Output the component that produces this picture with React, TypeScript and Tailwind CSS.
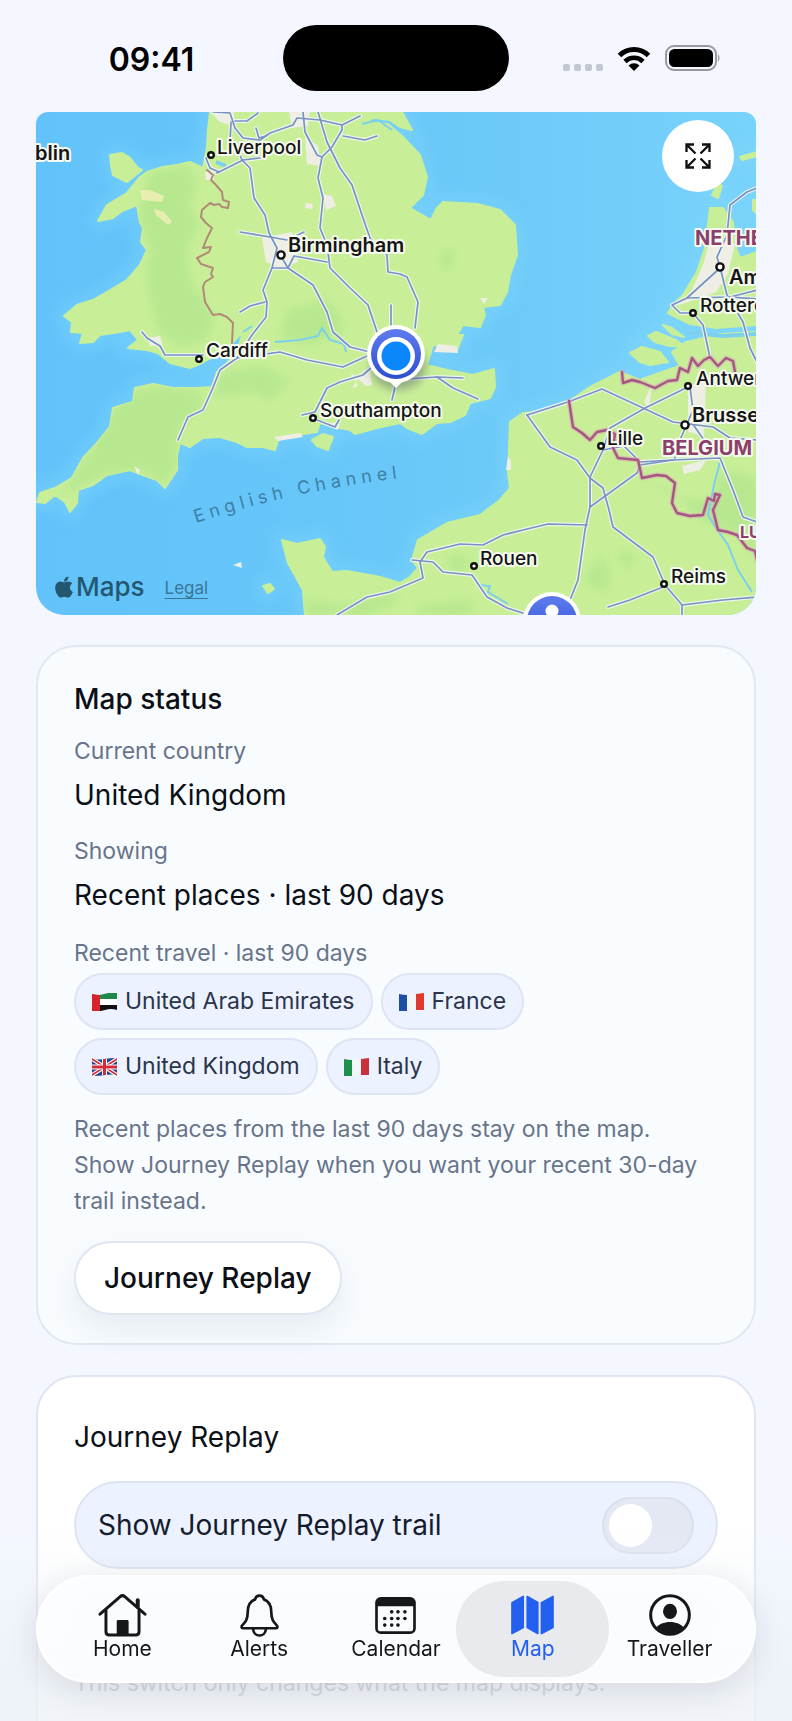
import { useState, type ReactNode } from "react";
import { FaApple } from "react-icons/fa";

const LAND = [
  // Great Britain
  "M210 112 L208 130 207 147 205 158 203 168 190 162 177 165 163 167 147 172 140 177 127 193 107 205 98 221 113 218 122 211 137 205 140 222 143 228 141 242 147 250 140 265 127 280 107 292 93 300 77 305 64 316 72 322 71 332 83 333 80 343 93 342 100 335 120 332 130 330 138 340 128 348 147 350 158 353 170 363 190 368 202 363 207 360 220 353 230 345 243 332 237 352 227 363 217 372 212 387 197 388 173 388 153 384 135 388 133 402 113 408 110 427 97 443 83 458 72 478 55 488 40 493 37 502 45 503 55 495 65 502 70 512 77 503 78 490 93 485 107 475 130 470 143 475 157 480 165 488 177 470 177 455 180 443 190 447 203 438 220 437 237 442 247 447 263 447 275 450 278 440 297 435 317 432 320 423 340 428 350 430 355 434 377 428 400 423 407 428 422 434 437 423 450 422 465 415 470 403 490 398 495 387 494 369 473 375 447 370 427 365 433 345 457 350 463 335 457 335 463 325 480 327 485 315 483 307 500 305 507 292 510 275 517 255 515 225 500 210 477 204 443 202 437 208 431 220 410 208 423 195 427 177 420 155 403 137 388 124 368 122 372 118 390 120 400 127 412 130 402 112Z",
  // Anglesey, Isle of Wight
  "M110 155 L122 153 130 158 138 168 142 170 127 182 113 175 111 165Z",
  "M312 440 L323 434 333 437 328 450 317 446Z",
  "M263 586 L270 584 274 589 268 593Z",
  // France and the Low Countries
  "M282 540 L297 544 320 539 325 547 323 557 332 572 347 571 380 577 400 583 410 577 418 568 412 560 418 540 447 523 480 515 500 500 510 488 508 473 510 422 523 413 540 412 568 402 590 387 620 372 640 380 662 372 680 366 672 352 686 342 704 338 722 334 757 332 757 325 716 328 690 324 668 313 673 305 683 295 697 272 705 248 710 208 723 208 733 222 735 245 740 258 757 252 757 615 305 615 303 590 288 563Z",
  "M648 336 L656 332 676 340 684 346 670 346 655 342Z",
  "M630 353 L642 347 660 352 668 362 650 365 640 362Z",
  "M663 325 L672 328 684 337 672 334Z",
  "M712 195 L718 183 722 186 718 198Z",
  "M740 157 L757 152 757 156 742 160Z",
  "M753 200 L757 200 757 214 753 210Z",
];

const FOREST = [
  "M150 172 L188 166 196 182 190 210 200 225 186 250 192 285 204 300 214 320 206 340 180 346 160 334 150 300 146 270 152 250 142 226 140 205Z",
  "M114 410 L135 392 160 386 200 392 205 405 186 420 176 442 178 462 165 484 140 470 106 474 78 488 60 495 84 462Z",
  "M220 372 L262 366 290 380 272 400 250 392 214 398Z",
  "M441 252 L450 247 454 262 448 272 441 264Z",
  "M640 484 L672 490 700 520 740 534 757 560 757 478 722 470 712 500 690 500Z",
  "M585 575 L602 555 610 572 608 592 588 585Z",
  "M448 555 L468 556 464 572 450 572Z",
  "M305 600 L345 605 390 592 400 600 370 615 306 615Z",
  "M288 310 L330 300 345 330 310 345 280 338Z",
  "M415 606 L470 600 474 615 420 615Z",
  "M620 550 L637 556 628 570 618 560Z",
];

const TOWNS = [
  "M262 238 L292 232 298 262 282 268 266 262Z",
  "M211 113 L234 112 234 126 220 122Z",
  "M305 137 L318 146 321 166 307 164Z",
  "M323 194 L332 196 336 206 326 210Z",
  "M289 112 L310 112 308 126 292 128Z",
  "M306 203 L313 204 312 209 305 208Z",
  "M205 172 L214 170 214 180 206 180Z",
  "M438 344 L457 346 458 353 434 352Z",
  "M147 338 L160 336 163 345 150 346Z",
  "M350 372 L358 386 352 388 364 370 370 370 372 385 366 386Z",
  "M709 242 L735 244 728 274 716 292 700 298 676 306 692 290 704 262Z",
  "M688 386 L706 380 704 436 688 432Z",
  "M682 466 L706 460 700 470 684 474Z",
  "M644 402 L652 384 649 408Z",
  "M508 457 L511 460 511 470 506 470Z",
  "M274 437 L300 433 303 437 278 441Z",
  "M332 422 L340 424 338 430 330 426Z",
  "M134 466 L140 470 138 475Z",
  "M233 565 L241 562 242 568Z",
  "M480 298 L488 298 484 304Z",
];

const ROADS = [
  "242,160 250,168 254,198 265,215 269,233 277,248 272,268 263,290 267,302 266,317 252,335 237,358 220,370 212,390 203,410 188,417 178,440",
  "213,112 230,113 235,128 243,138 260,140 270,133 293,125 297,118 320,120 342,125 360,116",
  "231,122 230,142 238,150 242,160",
  "235,121 247,121 258,113",
  "256,128 259,138 266,136",
  "206,158 210,168 219,172",
  "217,173 243,160 260,158",
  "303,112 305,132 317,155 322,157 318,178 323,198 320,228 327,245 330,268 350,288 368,305 377,332",
  "318,112 327,142 340,168 352,185 363,218 370,238 387,255 388,272 400,274 407,277 418,302 415,328",
  "322,157 332,147 342,130 342,125",
  "343,136 365,140 377,136",
  "240,232 270,237 287,240 304,232",
  "272,268 288,268 313,285 327,312 333,332 350,347 370,352",
  "282,258 288,268 294,256 327,262",
  "240,312 250,306 265,302",
  "142,332 147,338 160,346 165,355 203,355",
  "237,358 280,352 307,360 343,367 367,356",
  "302,415 315,412 327,388 340,382 363,375 372,367",
  "317,420 335,427 339,420",
  "390,380 437,377 463,378",
  "437,377 453,388 478,399",
  "396,383 392,400",
  "391,330 391,305",
  "527,415 550,447 577,460 590,478 603,488 609,510 613,527 653,557 665,585 682,605 682,615",
  "527,415 568,402 602,389 643,408 673,422 713,427 730,438 757,440",
  "688,387 647,407 610,428 603,450 590,477 590,507 585,530 578,580 570,600",
  "603,450 624,446 640,462 673,460",
  "590,507 637,473 640,465 673,460 720,458 733,490 743,517 757,522",
  "587,525 548,524 523,530 503,535 483,545 460,544 427,552 420,562 423,578 390,592 367,597 337,615",
  "412,560 433,562 443,572 472,575 487,597 507,608 523,613",
  "608,607 630,600 663,587",
  "682,605 723,600 757,597",
  "690,387 693,410 680,440 675,458",
  "692,423 704,440",
  "757,188 747,192 730,205 727,235 717,257 720,267 727,295 743,322 750,348 757,362",
  "720,268 687,298 672,305 680,313 693,313 703,325 710,358",
  "687,298 730,297 757,290",
  "730,297 757,299",
];

const BORDERS = [
  "569,401 573,427 582,433 590,440 597,432 607,430 615,434 613,448 618,458 628,459 638,460 642,478 657,475 666,476 675,483 672,503 677,513 690,516 703,515 708,498 714,501 715,494 720,495 713,510 718,530 728,532 737,535 747,548 755,551 757,560",
  "622,372 623,383 632,380 640,382 655,388 668,381 677,380 680,368 688,372 692,358 698,366 704,360 710,357 718,366 726,358 733,361 735,372",
];

type Place = {
  name: string;
  x: number;
  y: number;
  dot?: [number, number];
  major?: boolean;
};

const PLACES: Place[] = [
  { name: "blin", x: 35, y: 160, major: true },
  { name: "Liverpool", x: 217, y: 154, dot: [211, 155] },
  { name: "Birmingham", x: 288, y: 252, dot: [281, 255], major: true },
  { name: "Cardiff", x: 206, y: 357, dot: [199, 359] },
  { name: "Southampton", x: 320, y: 417, dot: [313, 418] },
  { name: "Amsterdam", x: 729, y: 284, dot: [720, 267], major: true },
  { name: "Rotterdam", x: 700, y: 312, dot: [693, 313] },
  { name: "Antwerp", x: 696, y: 385, dot: [688, 386] },
  { name: "Brussels", x: 692, y: 422, dot: [685, 425], major: true },
  { name: "Lille", x: 607, y: 445, dot: [601, 446] },
  { name: "Rouen", x: 480, y: 565, dot: [474, 566] },
  { name: "Reims", x: 671, y: 583, dot: [664, 584] },
];

function MapCanvas() {
  return (
    <svg
      viewBox="36 112 720 503"
      className="block h-auto w-full"
      role="img"
      aria-label="Map of southern England, northern France and Belgium"
    >
      <defs>
        <linearGradient id="sea" x1="0" y1="0" x2="1" y2="0">
          <stop offset="0" stopColor="#62c3fa" />
          <stop offset="0.35" stopColor="#66c6f9" />
          <stop offset="0.65" stopColor="#6dcaf8" />
          <stop offset="1" stopColor="#78d3fb" />
        </linearGradient>
        <linearGradient id="pin" x1="0" y1="0" x2="0" y2="1">
          <stop offset="0" stopColor="#5f7bee" />
          <stop offset="1" stopColor="#2c4fd0" />
        </linearGradient>
        <filter id="shallow" x="-10%" y="-10%" width="120%" height="120%">
          <feGaussianBlur stdDeviation="8" />
        </filter>
        <filter id="soft" x="-50%" y="-50%" width="200%" height="200%">
          <feGaussianBlur stdDeviation="4" />
        </filter>
        <clipPath id="land">
          {LAND.map((d) => (
            <path key={d} d={d} />
          ))}
        </clipPath>
        <path id="channel" d="M196 523 Q 300 488 420 476" />
      </defs>

      <rect x="36" y="112" width="720" height="503" fill="url(#sea)" />
      <g filter="url(#shallow)" stroke="#84d8fc" strokeWidth="12" fill="none" opacity="0.5">
        {LAND.map((d) => (
          <path key={d} d={d} />
        ))}
      </g>
      <g fill="#c8ef98" stroke="#c8ef98" strokeWidth="2" strokeLinejoin="round">
        {LAND.map((d) => (
          <path key={d} d={d} />
        ))}
      </g>
      <g clipPath="url(#land)">
        <g fill="#b5e78f" opacity="0.9" filter="url(#soft)">
          {FOREST.map((d) => (
            <path key={d} d={d} />
          ))}
        </g>
        <g fill="#e8eeb0">
          <path d="M140 190 L150 190 164 196 162 202 142 200Z" />
          <path d="M154 209 L164 212 172 222 168 225 156 215Z" />
        </g>
      </g>
      <g fill="#eeeee4">
        {TOWNS.map((d) => (
          <path key={d} d={d} />
        ))}
      </g>

      <g fill="none" stroke="#7dd0ec" strokeWidth="2">
        <path d="M243 332 L252 326 M275 342 L300 340 318 336 322 328 330 340 344 344 346 352 M362 124 L378 120 392 130" />
        <path d="M472 575 L480 585 490 586 488 592 508 604 M720 462 L714 485 708 515 716 528 728 545 738 570 752 592" />
        <path d="M686 332 L722 336 757 334 M216 162 L226 166" strokeWidth="4" />
      </g>

      <g fill="none" strokeLinejoin="round" strokeLinecap="round">
        {ROADS.map((points) => (
          <polyline key={points} points={points} stroke="#eef5ea" strokeWidth="4" />
        ))}
        {ROADS.map((points) => (
          <polyline key={points} points={points} stroke="#7892c3" strokeWidth="1.7" />
        ))}
        <polyline
          points="207,170 213,175 211,180 216,185 222,192 223,200 229,202 228,208 222,207 219,204 214,205 210,203 202,210 201,217 206,223 212,228 207,238 203,248 211,247 209,252 197,258 201,264 213,268 211,274 213,277 205,282 203,287 205,302 213,315 220,314 227,317 233,323 232,343"
          stroke="#b28a78"
          strokeWidth="2"
        />
        {BORDERS.map((points) => (
          <polyline key={points} points={points} stroke="#dba6b8" strokeWidth="5" opacity="0.6" />
        ))}
        {BORDERS.map((points) => (
          <polyline key={points} points={points} stroke="#a5587f" strokeWidth="2.4" />
        ))}
      </g>

      <g
        className="font-['Inter',sans-serif]"
        stroke="#f6faf0"
        strokeWidth="4"
        strokeLinejoin="round"
        paintOrder="stroke"
        fill="#151515"
      >
        {PLACES.map((place) => (
          <text
            key={place.name}
            x={place.x}
            y={place.y}
            fontSize={place.major ? 20 : 19}
            fontWeight={place.major ? 600 : 500}
          >
            {place.name}
          </text>
        ))}
        <g fill="#8c3f6b" fontWeight="700">
          <text x="695" y="245" fontSize="20">NETHERLANDS</text>
          <text x="662" y="455" fontSize="20">BELGIUM</text>
          <text x="740" y="538" fontSize="16">LUXEMBOURG</text>
        </g>
      </g>
      <g fill="#fff" stroke="#111" strokeWidth="2.4">
        {PLACES.map(
          (place) =>
            place.dot && (
              <circle
                key={place.name}
                cx={place.dot[0]}
                cy={place.dot[1]}
                r={place.major ? 3.6 : 2.8}
              />
            ),
        )}
      </g>
      <text
        className="font-['Inter',sans-serif] tracking-[5px]"
        fontSize="18"
        fill="#3e7fa5"
      >
        <textPath href="#channel">English Channel</textPath>
      </text>

      {/* current location */}
      <ellipse cx="398" cy="366" rx="28" ry="24" fill="#44505f" opacity="0.4" filter="url(#soft)" />
      <path d="M384 376 L396 388 408 376Z" fill="#fff" />
      <circle cx="396" cy="354" r="29" fill="#fff" />
      <circle cx="396" cy="354" r="25" fill="url(#pin)" />
      <circle cx="396" cy="356" r="19" fill="#fff" />
      <circle cx="396" cy="356" r="14.5" fill="#0b86fb" />

      <circle cx="552" cy="621" r="29" fill="#fff" />
      <circle cx="552" cy="621" r="25" fill="url(#pin)" />
      <circle cx="552" cy="611" r="6.5" fill="#fff" />
    </svg>
  );
}

function ExpandIcon() {
  return (
    <svg viewBox="0 0 26 26" className="size-[26px]" fill="none" stroke="#111" strokeWidth="2.3">
      <path d="M1.500 9V1.500H9M1.500 1.500L10.500 10.500" />
      <path d="M17 1.500H24.500V9M24.500 1.500L15.500 10.500" />
      <path d="M1.500 17V24.500H9M1.500 24.500L10.500 15.500" />
      <path d="M17 24.500H24.500V17M24.500 24.500L15.500 15.500" />
    </svg>
  );
}

function HomeIcon() {
  return (
    <svg viewBox="0 0 146 130" className="h-[43px] w-[49px]" fill="none" stroke="currentColor" strokeWidth="9" strokeLinecap="round" strokeLinejoin="round">
      <path d="M5 61 L66 8 Q73 2 80 8 L141 61" />
      <path d="M119 19 V38" strokeWidth="12" />
      <path d="M23 50 V114 Q23 124 33 124 H113 Q123 124 123 114 V50" />
      <path d="M60 83 H87 V122 H60Z" fill="currentColor" />
    </svg>
  );
}

function BellIcon() {
  return (
    <svg viewBox="0 0 116 128" className="h-[43px] w-[39px]" fill="none" stroke="currentColor" strokeWidth="8" strokeLinejoin="round">
      <path d="M58 5 C50 5 46 10 45 16 C29 22 23 36 23 53 C23 77 16 84 6 94 Q2 102 10 102 H106 Q114 102 110 94 C100 84 93 77 93 53 C93 36 87 22 71 16 C70 10 66 5 58 5Z" />
      <path d="M39 104 C40 130 76 130 77 104" />
    </svg>
  );
}

const CALENDAR_DOTS = [
  [50, 45], [69, 45], [90, 45],
  [29, 65], [50, 65], [69, 65], [90, 65],
  [29, 85], [50, 85], [69, 85],
];

function CalendarIcon() {
  return (
    <svg viewBox="0 0 123 112" className="h-[37px] w-[41px]">
      <rect x="4" y="4" width="115" height="104" rx="13" fill="none" stroke="currentColor" strokeWidth="8" />
      <path d="M4 28 V16 Q4 4 16 4 H107 Q119 4 119 16 V28Z" fill="currentColor" />
      {CALENDAR_DOTS.map(([cx, cy]) => (
        <circle key={`${cx}-${cy}`} cx={cx} cy={cy} r="5.500" fill="currentColor" />
      ))}
    </svg>
  );
}

function MapIcon() {
  return (
    <svg viewBox="0 0 130 120" className="h-10 w-[43px]" fill="currentColor" stroke="currentColor" strokeWidth="5" strokeLinejoin="round">
      <path d="M3 23 L37 4 V98 L3 116Z" />
      <path d="M49 4 L81 22 V116 L49 98Z" />
      <path d="M92 23 L127 4 V98 L92 116Z" />
    </svg>
  );
}

function TravellerIcon() {
  return (
    <svg viewBox="0 0 126 126" className="size-[42px]">
      <circle cx="63" cy="63" r="58" fill="none" stroke="currentColor" strokeWidth="9" />
      <ellipse cx="63" cy="52" rx="21" ry="23" fill="currentColor" />
      <path d="M21 103 C35 78 91 78 105 103 C85 127 41 127 21 103Z" fill="currentColor" />
    </svg>
  );
}

function StatusBar() {
  return (
    <header className="grid h-28 shrink-0 grid-cols-[1fr_226px_1fr] items-center pb-1 pt-2">
      <time className="pl-5 pt-1 text-center text-[32px] font-semibold leading-none text-black">
        09:41
      </time>
      <div className="h-[66px] rounded-full bg-black" />
      <div className="flex items-center justify-end gap-[14px] pr-[71px]">
        <div className="flex gap-1 pt-[18px]">
          <span className="size-[7px] rounded-xs bg-[#c3c7cf]" />
          <span className="size-[7px] rounded-xs bg-[#c3c7cf]" />
          <span className="size-[7px] rounded-xs bg-[#c3c7cf]" />
          <span className="size-[7px] rounded-xs bg-[#c3c7cf]" />
        </div>
        <svg viewBox="0 0 34 25" className="h-[25px] w-[34px]">
          <path d="M2.500 9.500 A20.500 20.500 0 0 1 31.500 9.500" fill="none" stroke="#000" strokeWidth="5" />
          <path d="M8 15.500 A12.800 12.800 0 0 1 26 15.500" fill="none" stroke="#000" strokeWidth="4.600" />
          <path d="M17 25 L11.500 19.500 A8 8 0 0 1 22.500 19.500Z" fill="#000" />
        </svg>
        <svg viewBox="0 0 56 26" className="h-[26px] w-14">
          <rect x="1" y="1" width="50" height="24" rx="8" fill="none" stroke="#97999e" strokeWidth="2" />
          <rect x="4" y="4" width="44" height="18" rx="5.500" fill="#000" />
          <path d="M53 9 Q56 13 53 17Z" fill="#97999e" />
        </svg>
      </div>
    </header>
  );
}

const FLAGS: Record<string, ReactNode> = {
  ae: (
    <>
      <path d="M0 1 Q6 3 12 1 T25 0 V6 H0Z" fill="#1f8a4c" />
      <path d="M0 6 H25 V12 H0Z" fill="#fff" />
      <path d="M0 12 H25 V17 Q19 15 13 17 T0 18Z" fill="#111" />
      <path d="M0 1 Q4 2 8 2 V18 L0 18Z" fill="#d8232a" />
    </>
  ),
  fr: (
    <>
      <path d="M0 1 Q4 2 8 2 V18 H0Z" fill="#1d4fa3" />
      <path d="M8 2 L17 1 V17 L8 18Z" fill="#f4f5f7" />
      <path d="M17 1 L25 0 V17 H17Z" fill="#e2392f" />
    </>
  ),
  gb: (
    <>
      <path d="M0 1 Q6 2 12 1 T25 0 V17 Q19 16 13 17 T0 18Z" fill="#26408f" />
      <path d="M0 1 L25 17 M25 1 L0 17" stroke="#fff" strokeWidth="4" />
      <path d="M0 1 L25 17 M25 1 L0 17" stroke="#d42b3a" strokeWidth="1.500" />
      <path d="M12.500 1 V17 M0 9 H25" stroke="#fff" strokeWidth="5" />
      <path d="M12.500 1 V17 M0 9 H25" stroke="#d42b3a" strokeWidth="3" />
    </>
  ),
  it: (
    <>
      <path d="M0 1 Q4 2 8 2 V18 H0Z" fill="#1f8f4d" />
      <path d="M8 2 L17 1 V17 L8 18Z" fill="#f4f5f7" />
      <path d="M17 1 L25 0 V17 H17Z" fill="#c8323c" />
    </>
  ),
};

const COUNTRIES = [
  { code: "ae", name: "United Arab Emirates" },
  { code: "fr", name: "France" },
  { code: "gb", name: "United Kingdom" },
  { code: "it", name: "Italy" },
];

const TABS = [
  { label: "Home", icon: <HomeIcon /> },
  { label: "Alerts", icon: <BellIcon /> },
  { label: "Calendar", icon: <CalendarIcon /> },
  { label: "Map", icon: <MapIcon />, active: true },
  { label: "Traveller", icon: <TravellerIcon /> },
];

function TabBar() {
  return (
    <nav className="absolute inset-x-9 bottom-[38px] z-20 flex rounded-full border-2 border-white bg-[#fcfdff]/90 px-4 py-1 shadow-[0_8px_32px_rgba(30,41,59,0.12)] backdrop-blur-md">
      {TABS.map((tab) => (
        <a
          key={tab.label}
          href={`#${tab.label.toLowerCase()}`}
          aria-current={tab.active ? "page" : undefined}
          className={
            tab.active
              ? "-mx-2 flex h-24 flex-1 basis-4 flex-col items-center rounded-full bg-[#e9eaed] pt-3 text-[#2360f0]"
              : "flex h-24 flex-1 flex-col items-center pt-3 text-[#15171a]"
          }
        >
          <span className="flex h-11 items-center">{tab.icon}</span>
          <span className="text-[21px] leading-6">{tab.label}</span>
        </a>
      ))}
    </nav>
  );
}

export default function App() {
  const [showTrail, setShowTrail] = useState(false);

  return (
    <div className="relative flex h-screen flex-col overflow-hidden bg-[#f4f7ff] font-['Inter',sans-serif] text-[#0c0f16]">
      <StatusBar />
      <main className="flex flex-1 flex-col gap-[30px] overflow-hidden px-9">
        <section className="relative shrink-0 overflow-hidden rounded-b-[28px] rounded-t-xl">
          <MapCanvas />
          <button
            type="button"
            aria-label="Expand map"
            className="absolute right-[22px] top-2 flex size-[72px] items-center justify-center rounded-full bg-white"
          >
            <ExpandIcon />
          </button>
          <div className="absolute bottom-3 left-4 flex items-center text-[#23566f]">
            <FaApple className="size-6" />
            <span className="text-[26px] font-medium leading-8">Maps</span>
            <a href="#legal" className="ml-5 pt-1 text-[17px] text-[#3a7595] underline underline-offset-4">
              Legal
            </a>
          </div>
        </section>

        <section className="shrink-0 rounded-[40px] border-2 border-[#e3e8f0] bg-[#f8fcff] px-9 pb-7 pt-8">
          <h2 className="text-[28px] font-medium leading-10">Map status</h2>
          <dl>
            <dt className="mt-4 text-[23px] leading-8 text-[#69748a]">Current country</dt>
            <dd className="mt-2 text-[28px] leading-10">United Kingdom</dd>
            <dt className="mt-5 text-[23px] leading-8 text-[#69748a]">Showing</dt>
            <dd className="mt-2 text-[28px] leading-10">Recent places · last 90 days</dd>
          </dl>
          <h3 className="mt-[22px] text-[23px] leading-8 text-[#69748a]">
            Recent travel · last 90 days
          </h3>
          <ul className="mt-1 flex max-w-[520px] flex-wrap gap-2">
            {COUNTRIES.map((country) => (
              <li
                key={country.code}
                className="flex h-[57px] items-center gap-2 rounded-full border-2 border-[#dee4f3] bg-[#ecf2ff] px-4 text-[23px] text-[#2a344a]"
              >
                <svg viewBox="0 0 25 18" className="h-[18px] w-[25px]" aria-hidden="true">
                  {FLAGS[country.code]}
                </svg>
                {country.name}
              </li>
            ))}
          </ul>
          <p className="mt-4 pr-4 text-[23px] leading-9 text-[#69748a]">
            Recent places from the last 90 days stay on the map. Show Journey Replay when you want
            your recent 30-day trail instead.
          </p>
          <button
            type="button"
            className="mt-[22px] h-[74px] rounded-full border-2 border-[#dfe5f2] bg-white px-7 text-[28px] font-medium shadow-[0_16px_32px_rgba(30,50,90,0.08)]"
          >
            Journey Replay
          </button>
        </section>

        <section className="h-[420px] shrink-0 rounded-t-[40px] border-2 border-[#dfe5f2] bg-white px-9 pt-10">
          <h2 className="text-[28px] leading-10">Journey Replay</h2>
          <label className="mt-6 flex h-[88px] items-center justify-between rounded-full border-2 border-[#dde3f1] bg-[#ecf2ff] px-[22px] text-[28px] text-[#141b2b]">
            Show Journey Replay trail
            <input
              type="checkbox"
              role="switch"
              checked={showTrail}
              onChange={(event) => setShowTrail(event.target.checked)}
              className="h-[57px] w-[92px] appearance-none rounded-full border-2 border-[#dbe0ec] bg-[#e3e8f3] p-[5px] before:block before:size-[43px] before:rounded-full before:bg-white checked:bg-[#2360f0] checked:before:translate-x-[35px]"
            />
          </label>
          <div className="mt-7 flex flex-col gap-3 opacity-40">
            <div className="h-6 rounded-full bg-[#c9d4ee]" />
            <div className="h-6 w-11/12 rounded-full bg-[#e1e8f6]" />
          </div>
          <p className="mt-2 text-[23px] leading-9 text-[#69748a]">
            This switch only changes what the map displays.
          </p>
        </section>
      </main>
      <div className="pointer-events-none absolute inset-x-0 bottom-0 z-10 h-48 bg-linear-to-b from-[#edf1f7]/0 to-[#edf1f7]/80 to-80%" />
      <TabBar />
    </div>
  );
}
